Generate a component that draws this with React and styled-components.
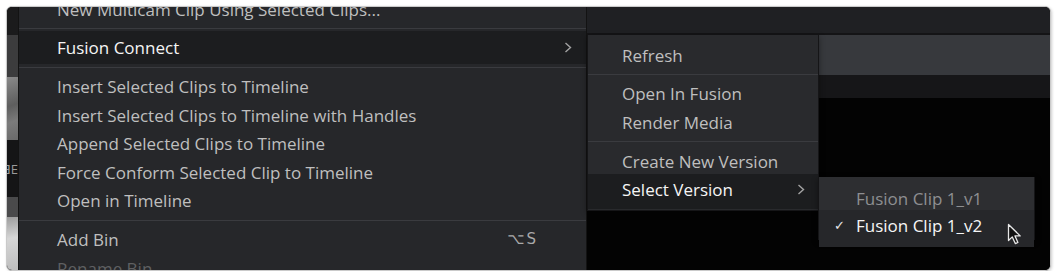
import React from "react";
import styled, { createGlobalStyle, css } from "styled-components";

const Global = createGlobalStyle`
  html, body { margin: 0; padding: 0; background: #ffffff; }
  body { font-family: "Open Sans", "Noto Sans", sans-serif; }
`;

const Frame = styled.div`
  margin: 6px 0 0 6px;
  width: 1045px;
  height: 265px;
  box-sizing: border-box;
  border: 1px solid #cacaca;
  border-radius: 6px;
  overflow: hidden;
  display: flex;
  background: #030303;
  box-shadow: 1px 1px 3px rgba(0, 0, 0, 0.2);
`;

const LeftStrip = styled.div`
  width: 11px;
  flex: none;
  display: flex;
  flex-direction: column;
  overflow: hidden;
`;

const StripBlock = styled.div`
  height: ${(p) => p.$h}px;
  flex: ${(p) => (p.$grow ? "1" : "none")};
  background: ${(p) => p.$bg};
  display: flex;
  align-items: center;
  justify-content: flex-end;
  overflow: hidden;
  color: #9a9a9a;
  font-size: 13px;
  white-space: nowrap;
`;

const MainMenu = styled.div`
  width: 569px;
  flex: none;
  box-sizing: border-box;
  background: #26272a;
  border-left: 1px solid #131313;
  border-right: 1px solid #131313;
  overflow: hidden;
`;

const MenuItems = styled.div`
  display: flex;
  flex-direction: column;
  margin-top: ${(p) => p.$offset || 0}px;
`;

const Item = styled.div`
  position: relative;
  display: flex;
  align-items: center;
  flex: none;
  height: ${(p) => p.$h || 28.6}px;
  padding: 0 ${(p) => p.$pr}px 0 ${(p) => p.$pl}px;
  font-size: 17px;
  white-space: nowrap;
  color: ${(p) =>
    p.$tone === "bright" ? "#f5f5f5" : p.$tone === "dim" ? "#5f6062" : p.$tone === "soft" ? "#8e8f91" : "#bfbfbf"};
  ${(p) =>
    p.$hl &&
    css`
      background: ${p.$hlbg || "#1c1d1f"};
      margin: -${p.$et}px 0 -${p.$eb}px;
      padding-top: ${p.$et}px;
      padding-bottom: ${p.$eb}px;
    `}
`;

const Label = styled.span`
  flex: 1;
`;

const Shortcut = styled.span`
  font-family: "DejaVu Sans", sans-serif;
  font-size: 15px;
  letter-spacing: 2px;
  color: #a9a9a9;
  margin-right: 33px;
`;

const Check = styled.span`
  width: 22px;
  flex: none;
  font-family: "DejaVu Sans", sans-serif;
  font-size: 13px;
  color: #e8e8e8;
`;

const Separator = styled.div`
  flex: none;
  height: 1px;
  background: #3a3b3f;
  margin: 4.5px 0;
`;

const RightArea = styled.div`
  position: relative;
  flex: 1;
  display: flex;
  flex-direction: column;
`;

const TopStrip = styled.div`
  height: 26px;
  flex: none;
  background: #1f2023;
  border-bottom: 2px solid #141416;
`;

const PanelHeader = styled.div`
  height: 40px;
  flex: none;
  background: #37393d;
`;

const PanelBar = styled.div`
  height: 23px;
  flex: none;
  background: #161618;
`;

const Viewer = styled.div`
  flex: 1;
  background: #030303;
`;

const Submenu = styled.div`
  position: absolute;
  left: ${(p) => p.$left};
  top: ${(p) => p.$top}px;
  width: ${(p) => p.$w}px;
  box-sizing: border-box;
  background: ${(p) => p.$bg};
  border: 1px solid #151517;
  border-top: none;
  padding: ${(p) => p.$pt}px 0 ${(p) => p.$pb}px;
  display: flex;
  flex-direction: column;
  z-index: ${(p) => p.$z || 1};
  box-shadow: 0 2px 6px rgba(0, 0, 0, 0.4);
`;

const Cursor = styled.svg`
  position: absolute;
  left: 188px;
  top: 46px;
`;

const Chevron = () => (
  <svg width="8" height="11" viewBox="0 0 8 11">
    <polyline points="1.5,1 6.5,5.5 1.5,10" fill="none" stroke="#a2a2a2" strokeWidth="1.4" />
  </svg>
);

export default function App() {
  return (
    <>
      <Global />
      <Frame>
        <LeftStrip>
          <StripBlock $h={28} $bg="#1b1b1c" />
          <StripBlock $h={42} $bg="#3c3c3d" />
          <StripBlock $h={63} $bg="linear-gradient(160deg, #8a8a8a, #5e5e5e 45%, #7b7b7b 70%, #6a6a6a)" />
          <StripBlock $h={57} $bg="#151516">ƎE</StripBlock>
          <StripBlock $h={20} $bg="#4a4a4b" />
          <StripBlock $grow $bg="linear-gradient(170deg, #9c9c9c, #d6d6d6 40%, #bdbdbd)" />
        </LeftStrip>

        <MainMenu>
          <MenuItems $offset={-12}>
            <Item $pl={38} $pr={15}>
              <Label>New Multicam Clip Using Selected Clips...</Label>
            </Item>
            <Separator />
            <Item $pl={38} $pr={14} $tone="bright" $hl $et={2.5} $eb={2}>
              <Label>Fusion Connect</Label>
              <Chevron />
            </Item>
            <Separator />
            <Item $pl={38} $pr={15}>
              <Label>Insert Selected Clips to Timeline</Label>
            </Item>
            <Item $pl={38} $pr={15}>
              <Label>Insert Selected Clips to Timeline with Handles</Label>
            </Item>
            <Item $pl={38} $pr={15}>
              <Label>Append Selected Clips to Timeline</Label>
            </Item>
            <Item $pl={38} $pr={15}>
              <Label>Force Conform Selected Clip to Timeline</Label>
            </Item>
            <Item $pl={38} $pr={15}>
              <Label>Open in Timeline</Label>
            </Item>
            <Separator />
            <Item $pl={38} $pr={15}>
              <Label>Add Bin</Label>
              <Shortcut>⌥S</Shortcut>
            </Item>
            <Item $pl={38} $pr={15} $tone="dim">
              <Label>Rename Bin</Label>
            </Item>
          </MenuItems>
        </MainMenu>

        <RightArea>
          <TopStrip />
          <PanelHeader />
          <PanelBar />
          <Viewer />

          <Submenu $left="0px" $top={28} $w={232} $bg="#292a2d" $pt={6} $pb={6}>
            <Item $pl={34} $pr={14}>
              <Label>Refresh</Label>
            </Item>
            <Separator />
            <Item $pl={34} $pr={14}>
              <Label>Open In Fusion</Label>
            </Item>
            <Item $pl={34} $pr={14}>
              <Label>Render Media</Label>
            </Item>
            <Separator />
            <Item $pl={34} $pr={14}>
              <Label>Create New Version</Label>
            </Item>
            <Item $pl={34} $pr={13} $tone="bright" $hl $et={1} $eb={5}>
              <Label>Select Version</Label>
              <Chevron />
              <Submenu $left="100%" $top={2.5} $w={217} $bg="#2d2e31" $pt={8.5} $pb={0} $z={2}>
                <Item $h={27} $pl={15} $pr={10} $tone="soft">
                  <Check />
                  <Label>Fusion Clip 1_v1</Label>
                </Item>
                <Item $h={27} $pl={15} $pr={10} $tone="bright" $hl $hlbg="#26272a" $et={2} $eb={7.5}>
                  <Check>✓</Check>
                  <Label>Fusion Clip 1_v2</Label>
                </Item>
                <Cursor width="16" height="23" viewBox="0 0 16 23">
                  <path
                    d="M1.5 1.5 L1.5 17.5 L5.3 13.9 L8.3 20.6 L10.9 19.5 L8 12.9 L13.2 12.9 Z"
                    fill="#111"
                    stroke="#e6e6e6"
                    strokeWidth="1.3"
                    strokeLinejoin="round"
                  />
                </Cursor>
              </Submenu>
            </Item>
          </Submenu>
        </RightArea>
      </Frame>
    </>
  );
}
